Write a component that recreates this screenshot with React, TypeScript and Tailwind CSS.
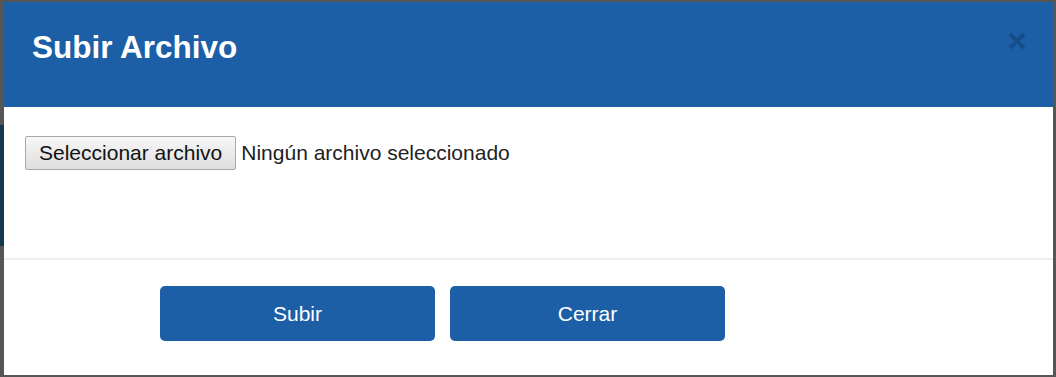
const App = () => {
  return (
    <div className="flex h-[377px] w-[1056px] bg-[#565656] pt-[2px] pb-[2px] font-['Liberation_Sans',Arial,sans-serif]">
      <div className="flex w-[4px] flex-col">
        <div className="h-[123px] bg-[#565656]" />
        <div className="h-[121px] bg-[#14394f]" />
        <div className="flex-1 bg-[#565656]" />
      </div>
      <div className="flex flex-1 flex-col bg-white">
        <div className="flex h-[105px] items-start justify-between bg-[#1c5fa6] pl-[28px] pr-[27px] pt-[28px]">
          <h1 className="text-[31.5px] leading-[34px] font-bold text-white">Subir Archivo</h1>
          <svg className="mt-[2px]" width="18" height="18" viewBox="0 0 18 18">
            <path d="M2 2 L16 16 M16 2 L2 16" stroke="#164d88" strokeWidth="4" strokeLinecap="butt" />
          </svg>
        </div>
        <div className="h-[151px] pl-[21px] pt-[29px]">
          <div className="flex items-center gap-[5px] text-[21px] text-[#222]">
            <span className="flex h-[34px] items-center rounded-[2px] border border-[#a9a9a9] bg-gradient-to-b from-[#f7f7f7] to-[#dedede] px-[13px] text-[#111]">
              Seleccionar archivo
            </span>
            <span>Ningún archivo seleccionado</span>
          </div>
        </div>
        <div className="h-[2px] bg-[#efefef]" />
        <div className="flex flex-1 gap-[15px] bg-white pl-[156px] pt-[26px]">
          <button className="h-[55px] w-[275px] rounded-[5px] bg-[#1c5fa6] text-[21px] text-white">Subir</button>
          <button className="h-[55px] w-[275px] rounded-[5px] bg-[#1c5fa6] text-[21px] text-white">Cerrar</button>
        </div>
      </div>
      <div className="w-[3px] bg-[#565656]" />
    </div>
  );
};

export default App;
